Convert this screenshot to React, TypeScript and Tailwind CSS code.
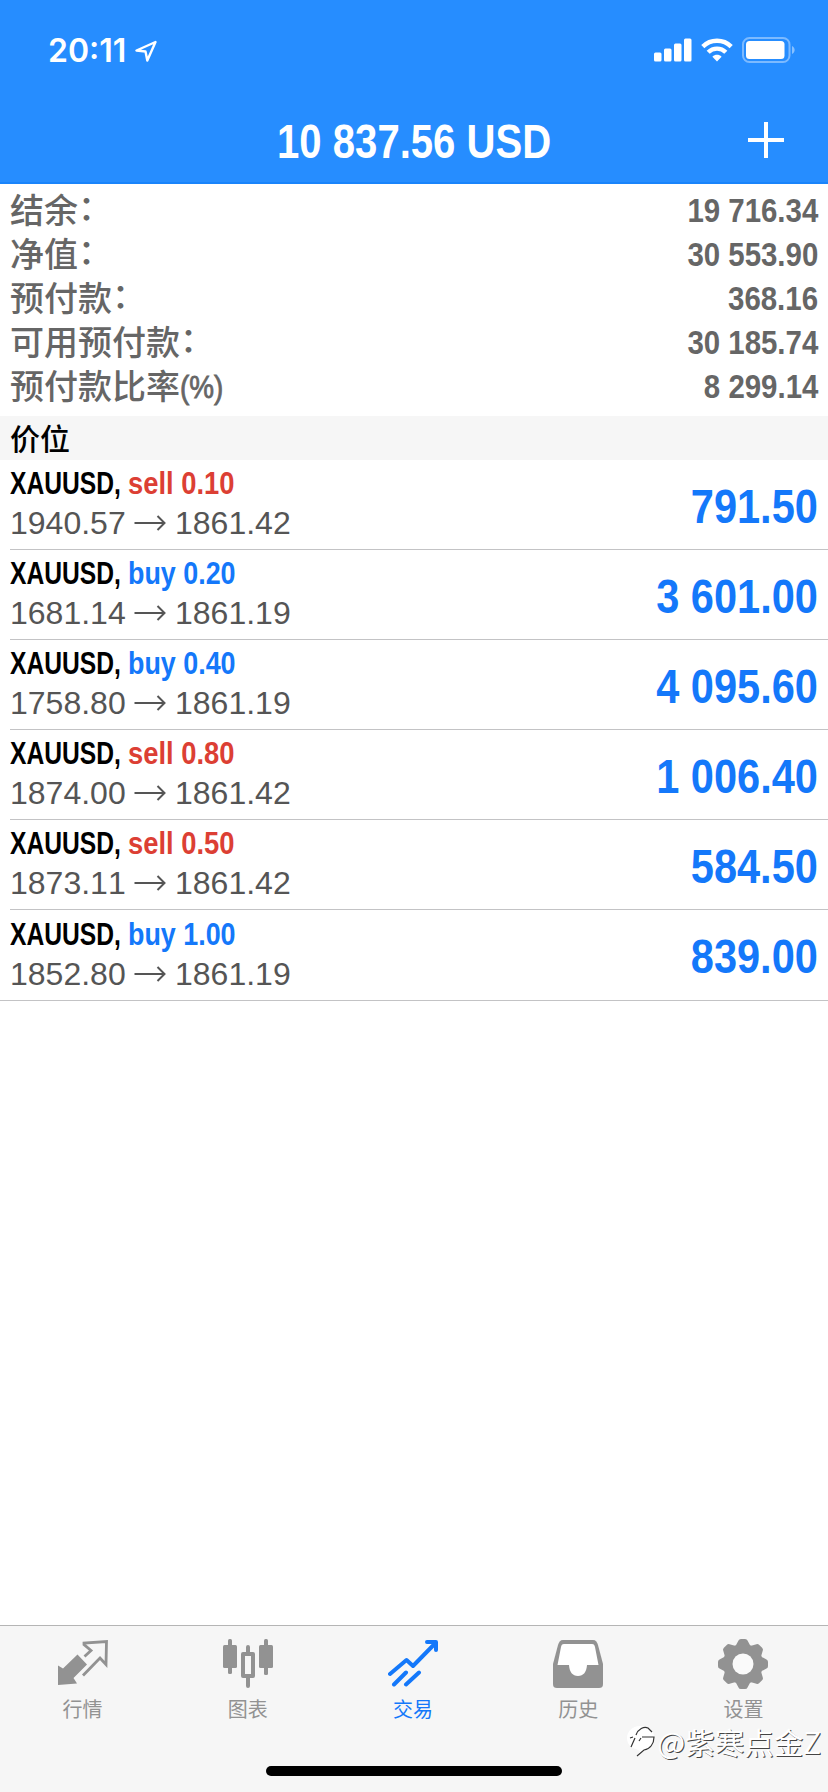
import type { ReactNode } from "react";
import clsx from "clsx";

interface Position {
  symbol: string;
  side: "buy" | "sell";
  volume: string;
  open: string;
  current: string;
  profit: string;
}

const summary = [
  { label: "结余", colon: true, value: "19 716.34" },
  { label: "净值", colon: true, value: "30 553.90" },
  { label: "预付款", colon: true, value: "368.16" },
  { label: "可用预付款", colon: true, value: "30 185.74" },
  { label: "预付款比率", colon: false, value: "8 299.14" },
];

const positions: Position[] = [
  { symbol: "XAUUSD", side: "sell", volume: "0.10", open: "1940.57", current: "1861.42", profit: "791.50" },
  { symbol: "XAUUSD", side: "buy", volume: "0.20", open: "1681.14", current: "1861.19", profit: "3 601.00" },
  { symbol: "XAUUSD", side: "buy", volume: "0.40", open: "1758.80", current: "1861.19", profit: "4 095.60" },
  { symbol: "XAUUSD", side: "sell", volume: "0.80", open: "1874.00", current: "1861.42", profit: "1 006.40" },
  { symbol: "XAUUSD", side: "sell", volume: "0.50", open: "1873.11", current: "1861.42", profit: "584.50" },
  { symbol: "XAUUSD", side: "buy", volume: "1.00", open: "1852.80", current: "1861.19", profit: "839.00" },
];

export default function App() {
  return (
    <div className="relative flex h-[1792px] w-[828px] flex-col overflow-hidden bg-white font-['Liberation_Sans','Noto_Sans_CJK_SC',sans-serif]">
      <Header />
      <Summary />
      <div className="flex h-11 items-center bg-[#f6f6f6] pb-[3px] pl-2.5 font-['Noto_Sans_CJK_SC',sans-serif] text-[30px] leading-none font-medium text-black">
        价位
      </div>
      <div>
        {positions.map((position, index) => (
          <PositionRow key={index} position={position} last={index === positions.length - 1} />
        ))}
      </div>
      <TabBar />
      <Watermark />
    </div>
  );
}

function Header() {
  return (
    <header className="flex h-[184px] flex-col border-b-2 border-[#1a84fb] bg-[#268dff] text-white">
      <div className="flex h-[99px] items-center justify-between pr-[33px] pl-[48px]">
        <div className="flex items-center gap-[9px] pt-0.5">
          <span className="font-['Inter',sans-serif] text-[32px] leading-none font-semibold">20:11</span>
          <svg className="h-[22px] w-[22px]" viewBox="0 0 22 22" fill="none" stroke="currentColor" strokeWidth="2.4" strokeLinejoin="round">
            <path d="M20.5 2 L1.5 10.5 L10.5 11.5 L12.3 20.5 Z" />
          </svg>
        </div>
        <div className="flex items-center">
          <svg className="mr-[9px] h-6 w-[38px]" viewBox="0 0 38 24" fill="currentColor">
            <rect x="0" y="14.5" width="7.5" height="9" rx="1.5" />
            <rect x="10" y="10.5" width="7.5" height="13" rx="1.5" />
            <rect x="20" y="5.5" width="7.5" height="18" rx="1.5" />
            <rect x="30" y="0.5" width="7.5" height="23" rx="1.5" />
          </svg>
          <svg className="mr-[9px] h-6 w-8" viewBox="0 0 32 24" fill="none" stroke="currentColor" strokeWidth="4.4">
            <path d="M1.8 8.6 C9.6 0.8 22.4 0.8 30.2 8.6" />
            <path d="M7.2 14.2 C12 9.4 20 9.4 24.8 14.2" />
            <path d="M11.4 18.8 C14 16.2 18 16.2 20.6 18.8 L16 23.4 Z" fill="currentColor" stroke="none" />
          </svg>
          <svg className="h-[26px] w-[53px]" viewBox="0 0 53 26">
            <rect x="1" y="1" width="46.5" height="24" rx="6.5" fill="none" stroke="#fff" strokeOpacity="0.4" strokeWidth="2" />
            <rect x="4" y="4" width="38.5" height="18" rx="3.5" fill="#fff" />
            <path d="M50 9 C53.5 10.5 53.5 15.5 50 17 Z" fill="#fff" fillOpacity="0.45" />
          </svg>
        </div>
      </div>
      <div className="grid grid-cols-[1fr_auto_1fr] items-center">
        <span />
        <h1 className="origin-center scale-x-[0.835] pt-1 text-[48px] leading-[78px] font-bold whitespace-nowrap">10 837.56 USD</h1>
        <svg className="mr-[44px] h-9 w-9 justify-self-end" viewBox="0 0 36 36" stroke="currentColor" strokeWidth="4">
          <path d="M18 0 V36 M0 18 H36" />
        </svg>
      </div>
    </header>
  );
}

function Summary() {
  return (
    <section className="h-[232px] px-2.5 pt-[3px] text-[#666]">
      {summary.map((row) => (
        <div key={row.label} className="flex h-11 items-center justify-between">
          <div className="flex items-center font-['Noto_Sans_CJK_SC',sans-serif] text-[34px] leading-[44px] font-medium">
            {row.label}
            {row.colon ? (
              <span className="relative -top-[3px]">：</span>
            ) : (
              <span className="origin-left scale-x-[0.87] pt-1 font-['Liberation_Sans',sans-serif] text-[32px] [-webkit-text-stroke:0.8px_#666]">
                (%)
              </span>
            )}
          </div>
          <div className="origin-right scale-x-[0.865] pt-px text-[34px] leading-[44px] font-bold">{row.value}</div>
        </div>
      ))}
    </section>
  );
}

function PositionRow({ position, last }: { position: Position; last: boolean }) {
  return (
    <div className={clsx(last ? "border-b border-[#c3c3c5] pl-2.5" : "pl-2.5")}>
      <div className={clsx("flex h-[90px] items-center justify-between pr-2.5", !last && "border-b border-[#c3c3c5]")}>
        <div className="pb-[3px]">
          <div className="flex h-10 text-[32px] leading-[42px] font-bold">
            <div className="w-[118px]">
              <span className="inline-block origin-left scale-x-[0.77] text-black">{position.symbol},</span>
            </div>
            <span
              className={clsx(
                "inline-block origin-left",
                position.side === "sell" ? "scale-x-[0.855] text-[#dc3f34]" : "scale-x-[0.84] text-[#1478fa]"
              )}
            >
              {position.side} {position.volume}
            </span>
          </div>
          <div className="flex h-[42px] items-center text-[32px] leading-[42px] text-[#555] [font-kerning:none]">
            <span className="w-[124px]">{position.open}</span>
            <svg className="h-4 w-8" viewBox="0 0 32 16" fill="none" stroke="currentColor" strokeWidth="2">
              <path d="M0.5 8 H30.5 M23.5 1 L30.5 8 L23.5 15" />
            </svg>
            <span className="ml-[9px]">{position.current}</span>
          </div>
        </div>
        <div className="origin-right scale-x-[0.865] pt-1 text-[48px] leading-[86px] font-bold text-[#1478fa]">{position.profit}</div>
      </div>
    </div>
  );
}

function TabBar() {
  return (
    <nav className="mt-auto flex h-[167px] flex-col border-t border-[#b5b5b5] bg-[#f6f6f6]">
      <div className="grid grid-cols-5 pr-0.5">
        <Tab label="行情">
          <path d="M0 26.5 L5 29.5 L19.5 15.500 L29 25.500 L15.500 39 L19 44.500 L0 46 Z" />
          <path d="M26.500 17.500 L33 11.500 L26 5.500 L26 4 L48.500 2.500 L48 25.500 L42 19 L25 36.500" fill="none" stroke="currentColor" strokeWidth="2.8" />
        </Tab>
        <Tab label="图表">
          <rect x="0" y="6" width="14" height="23" rx="1.5" />
          <rect x="5" y="0" width="4" height="35" rx="1.5" />
          <rect x="36" y="6" width="14" height="23" rx="1.5" />
          <rect x="41" y="0" width="4" height="36" rx="1.5" />
          <rect x="20" y="15" width="10" height="22" fill="none" stroke="currentColor" strokeWidth="4" strokeLinejoin="round" />
          <path d="M25 8 V14 M25 38 V47" stroke="currentColor" strokeWidth="4" strokeLinecap="round" />
        </Tab>
        <Tab label="交易" active>
          <path
            d="M2 35 L18.5 21 L25 27 L48 3.5 M39 3 H48 V11 M6 45.5 L18 33.5 M18 45.5 L31 33.5"
            fill="none"
            stroke="currentColor"
            strokeWidth="4"
            strokeLinecap="round"
            strokeLinejoin="round"
          />
        </Tab>
        <Tab label="历史">
          <path d="M10 1 H40 C43 1 44 3 45 6 L50 25 V45 C50 48 48.5 49 46 49 H4 C1.5 49 0 48 0 45 V25 L5 6 C6 3 7 1 10 1 Z" />
          <path d="M11 5 H39 C41 5 41.5 6 42 8 L45.5 26 H34 C33.5 33 30.5 37 25 37 C19.5 37 16.5 33 16 26 H4.5 L8 8 C8.5 6 9 5 11 5 Z" fill="#fff" />
        </Tab>
        <Tab label="设置">
          <Gear />
        </Tab>
      </div>
      <div className="mt-auto mb-4 h-2.5 w-[296px] self-center rounded-full bg-black" />
    </nav>
  );
}

function Tab({ label, active, children }: { label: string; active?: boolean; children: ReactNode }) {
  return (
    <div className={clsx("flex flex-col items-center pt-[13px]", active ? "text-[#1478fa]" : "text-[#929292]")}>
      <svg className="h-[50px] w-[50px]" viewBox="0 0 50 50" fill="currentColor">
        {children}
      </svg>
      <span className="mt-1.5 font-['Noto_Sans_CJK_SC',sans-serif] text-[20px] leading-[28px]">{label}</span>
    </div>
  );
}

function Gear() {
  const teeth = [0, 45, 90, 135, 180, 225, 270, 315];

  return (
    <>
      <circle cx="25" cy="25" r="20" />
      {teeth.map((angle) => (
        <path key={angle} d="M17 8 L20.5 1.5 Q21 0 23 0 H27 Q29 0 29.5 1.5 L33 8 Z" transform={`rotate(${angle} 25 25)`} />
      ))}
      <circle cx="25" cy="25" r="10.5" fill="#fafafa" />
    </>
  );
}

function Watermark() {
  return (
    <div className="absolute right-[7px] bottom-[33px] flex items-center">
      <svg className="h-[34px] w-[30px]" viewBox="0 0 30 34" fill="none">
        <path d="M13 2 C5 2 0 8 0 14 C0 20 4 24 9 25 L13 27 L10 33 L18 26 C24 25 27 20 27 13 C27 6 21 2 13 2 Z" fill="#fff" />
        <path d="M3 14 L6 13 M9 11 C11 5 17 2 21 4 L25 8 M15 13 H27 C27 20 23 25 17 26 L10 32 M8 14 L4 23 M14 14 L12 17" stroke="#333" strokeWidth="1.2" />
      </svg>
      <span className="font-['Noto_Sans_CJK_SC',sans-serif] text-[29.5px] leading-9 text-white [text-shadow:1px_1px_0_#444]">@紫寒点金Z</span>
    </div>
  );
}
